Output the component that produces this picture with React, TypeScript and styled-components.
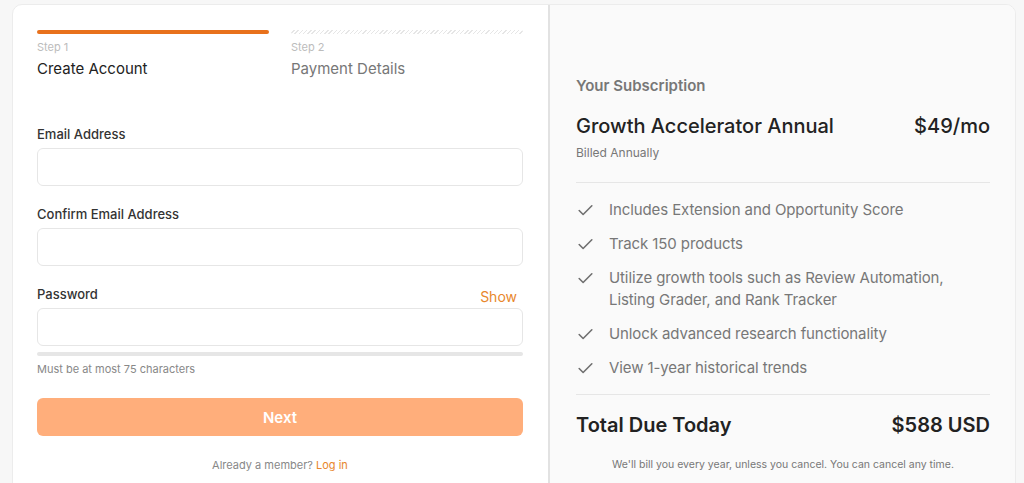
import React from "react";
import styled, { createGlobalStyle } from "styled-components";
import { Check } from "lucide-react";

const GlobalStyle = createGlobalStyle`
  * { box-sizing: border-box; }
  body {
    margin: 0;
    background: #f7f7f7;
    font-family: Inter, "Noto Sans", sans-serif;
    color: #222;
  }
`;

const Page = styled.div`
  padding: 4px 8px 0 12px;
`;

const Card = styled.div`
  display: grid;
  grid-template-columns: 537px 1fr;
  border: 1px solid #ececec;
  border-radius: 10px;
  overflow: hidden;
  background: #fff;
  height: 520px;
`;

const FormPanel = styled.div`
  padding: 25px 25px 0 24px;
  border-right: 2px solid #e2e2e2;
  display: flex;
  flex-direction: column;
`;

const Steps = styled.div`
  display: grid;
  grid-template-columns: 1fr 1fr;
  gap: 22px;
`;

const Step = styled.div``;

const StepBar = styled.div<{ $active?: boolean }>`
  height: 4px;
  border-radius: 2px;
  background: ${(p) =>
    p.$active
      ? "#e8711c"
      : "repeating-linear-gradient(-45deg, #ffffff 0 2px, #e6e6e6 2px 3px)"};
`;

const StepLabel = styled.div`
  margin-top: 5px;
  font-size: 11px;
  line-height: 16px;
  color: #bcbcbc;
`;

const StepTitle = styled.div<{ $active?: boolean }>`
  margin-top: 4px;
  font-size: 15px;
  line-height: 20px;
  color: ${(p) => (p.$active ? "#222" : "#777")};
`;

const Fields = styled.div`
  margin-top: 45px;
  display: flex;
  flex-direction: column;
  gap: 18px;
`;

const Field = styled.div`
  display: flex;
  flex-direction: column;
`;

const LabelRow = styled.div`
  display: flex;
  justify-content: space-between;
  align-items: flex-end;
  height: 18px;
  margin-bottom: 6px;
`;

const Label = styled.label`
  font-size: 13px;
  font-weight: 500;
  color: #333;
`;

const ShowLink = styled.span`
  font-size: 14px;
  color: #e8872c;
  margin-right: 6px;
  margin-bottom: -3px;
`;

const Input = styled.input`
  height: 38px;
  border: 1px solid #e6e6e6;
  border-radius: 6px;
  background: #fff;
  outline: none;
  padding: 0 12px;
  font-family: inherit;
  font-size: 14px;
`;

const Strength = styled.div`
  margin-top: 6px;
  height: 4px;
  border-radius: 2px;
  background: #e6e6e6;
`;

const Hint = styled.div`
  margin-top: 6px;
  font-size: 11px;
  color: #888;
`;

const NextButton = styled.button`
  margin-top: 22px;
  height: 38px;
  border: none;
  border-radius: 6px;
  background: #ffae7b;
  color: #fff;
  font-family: inherit;
  font-size: 15px;
  font-weight: 600;
`;

const Member = styled.div`
  margin-top: 22px;
  text-align: center;
  font-size: 11px;
  color: #888;

  a {
    color: #e8872c;
    text-decoration: none;
  }
`;

const SummaryPanel = styled.div`
  background: #fafafa;
  padding: 71px 25px 0 26px;
`;

const SummaryLabel = styled.div`
  font-size: 15px;
  font-weight: 600;
  color: #777;
`;

const PlanRow = styled.div<{ $total?: boolean }>`
  display: flex;
  justify-content: space-between;
  align-items: baseline;
  margin-top: ${(p) => (p.$total ? "18px" : "19px")};
  font-size: 20px;
  font-weight: ${(p) => (p.$total ? 600 : 500)};
  color: #222;
`;

const Billed = styled.div`
  margin-top: 7px;
  font-size: 12px;
  color: #777;
`;

const Divider = styled.hr<{ $gap?: number }>`
  border: none;
  border-top: 1px solid #e6e6e6;
  margin: ${(p) => p.$gap ?? 0}px 0 0;
`;

const Features = styled.ul`
  list-style: none;
  margin: 16px 0 15px;
  padding: 0;
  display: flex;
  flex-direction: column;
  gap: 12px;
`;

const Feature = styled.li`
  display: flex;
  gap: 14px;
  font-size: 15px;
  line-height: 22px;
  letter-spacing: -0.1px;
  color: #777;

  svg {
    flex: none;
    margin-top: 2px;
  }
`;

const Fine = styled.div`
  margin-top: 21px;
  text-align: center;
  font-size: 10.5px;
  color: #777;
`;

const features = [
  "Includes Extension and Opportunity Score",
  "Track 150 products",
  "Utilize growth tools such as Review Automation, Listing Grader, and Rank Tracker",
  "Unlock advanced research functionality",
  "View 1-year historical trends",
];

export default function App() {
  return (
    <Page>
      <GlobalStyle />
      <Card>
        <FormPanel>
          <Steps>
            <Step>
              <StepBar $active />
              <StepLabel>Step 1</StepLabel>
              <StepTitle $active>Create Account</StepTitle>
            </Step>
            <Step>
              <StepBar />
              <StepLabel>Step 2</StepLabel>
              <StepTitle>Payment Details</StepTitle>
            </Step>
          </Steps>

          <Fields>
            <Field>
              <LabelRow>
                <Label>Email Address</Label>
              </LabelRow>
              <Input type="email" />
            </Field>
            <Field>
              <LabelRow>
                <Label>Confirm Email Address</Label>
              </LabelRow>
              <Input type="email" />
            </Field>
            <Field>
              <LabelRow>
                <Label>Password</Label>
                <ShowLink>Show</ShowLink>
              </LabelRow>
              <Input type="password" />
              <Strength />
              <Hint>Must be at most 75 characters</Hint>
            </Field>
          </Fields>

          <NextButton>Next</NextButton>
          <Member>
            Already a member? <a href="#">Log in</a>
          </Member>
        </FormPanel>

        <SummaryPanel>
          <SummaryLabel>Your Subscription</SummaryLabel>
          <PlanRow>
            <span>Growth Accelerator Annual</span>
            <span>$49/mo</span>
          </PlanRow>
          <Billed>Billed Annually</Billed>
          <Divider $gap={22} />
          <Features>
            {features.map((f) => (
              <Feature key={f}>
                <Check size={19} strokeWidth={2} color="#6f6f6f" />
                <span>{f}</span>
              </Feature>
            ))}
          </Features>
          <Divider />
          <PlanRow $total>
            <span>Total Due Today</span>
            <span>$588 USD</span>
          </PlanRow>
          <Fine>We'll bill you every year, unless you cancel. You can cancel any time.</Fine>
        </SummaryPanel>
      </Card>
    </Page>
  );
}
